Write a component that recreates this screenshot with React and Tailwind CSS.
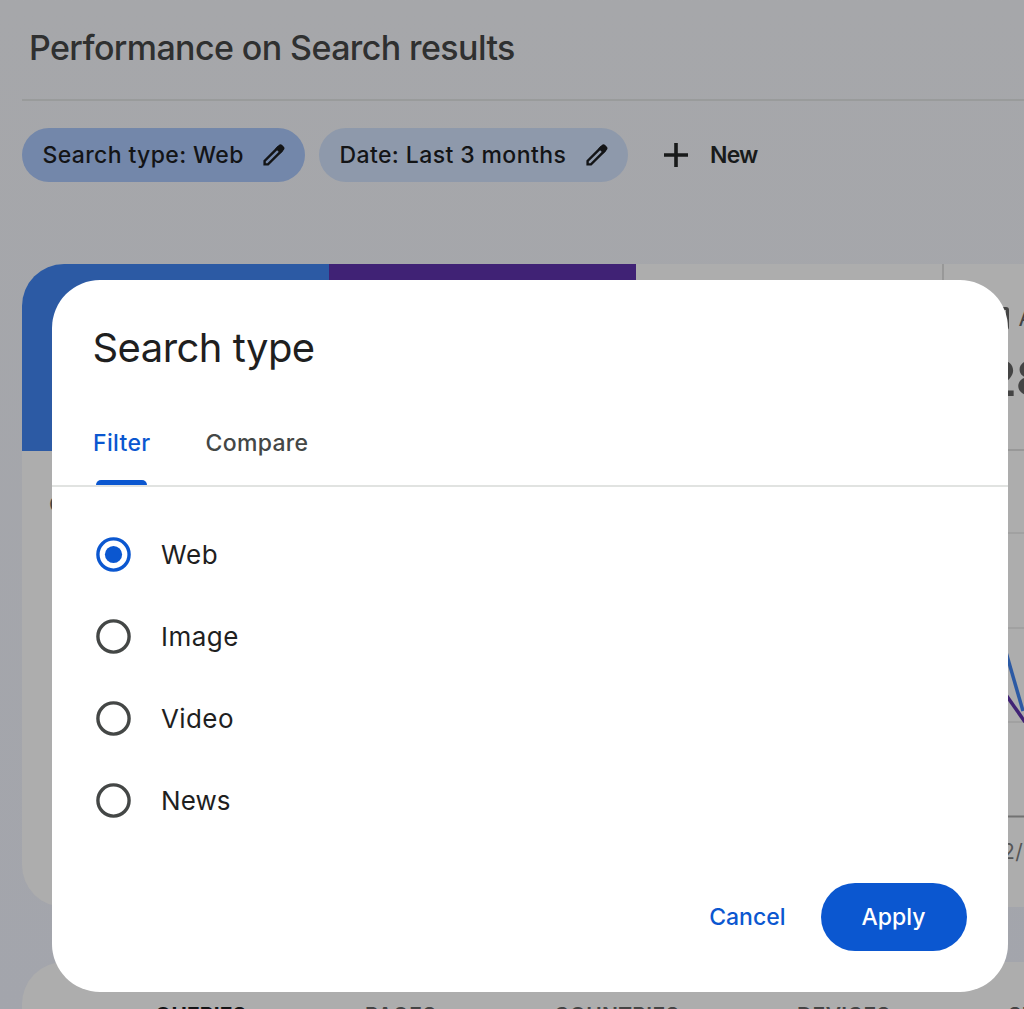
import React from "react";

function Pencil() {
  return (
    <svg className="size-[22px] shrink-0" viewBox="0 0 22 22" fill="none">
      <path d="M1.6 20.4v-3.4L14.8 3.8l3.4 3.4L5 20.4z" stroke="#131416" strokeWidth="2.4" />
      <path d="M12.4 4.4l3.5-3.4q1.6-1.4 3.2 0l1.7 1.7q1.4 1.6 0 3.2l-3.4 3.5z" fill="#131416" />
    </svg>
  );
}

function Chip({ label, className, textClass }) {
  return (
    <button className={"flex h-[54px] items-center rounded-full pl-[20.5px] pr-5 " + className}>
      <span className={"flex-1 whitespace-nowrap text-left text-[23px] font-medium text-[#131416] " + textClass}>{label}</span>
      <Pencil />
    </button>
  );
}

function Metrics() {
  return (
    <div className="flex h-[187px] w-[1229px]">
      <div className="w-[307px] bg-[#2c5aa4]" />
      <div className="w-[307px] bg-[#402275]" />
      <div className="w-[307.5px] border-b-2 border-r-2 border-[#989898]" />
      <div className="flex flex-1 flex-col border-b-2 border-[#989898] pl-[42px] pt-[42px] text-[#444]">
        <div className="flex h-[24px] items-center gap-[10px]">
          <span className="size-[23px] shrink-0 rounded-[3px] border-[3px] border-[#444]" />
          <span className="whitespace-nowrap text-[23px]">Average position</span>
        </div>
        <span className="mt-[18px] text-[50px] font-semibold leading-[60px] tracking-[-1px]">28.4</span>
      </div>
    </div>
  );
}

function Chart() {
  return (
    <div className="relative h-[456px]">
      <span className="absolute left-[27px] top-[40px] text-[22px] leading-[26px] text-[#444]">Clicks</span>
      <svg className="absolute left-0 top-0" width="1002" height="456" fill="none">
        <path d="M30 82H1002M30 177H1002M30 271H1002" stroke="#9d9d9d" strokeWidth="1.6" />
        <path d="M30 365.5H1002" stroke="#727272" strokeWidth="2" />
        <path d="M982 241L1003 271" stroke="#402275" strokeWidth="3.5" />
        <path d="M982.5 196L1001 260" stroke="#2c5aa4" strokeWidth="3.5" />
      </svg>
      <span className="absolute left-[980px] top-[389px] text-[21px] leading-[24px] tracking-[0.5px] text-[#555]">2/8</span>
    </div>
  );
}

const TABS = [
  ["QUERIES", "w-[210px] text-[#131416] font-bold tracking-[0.1px]"],
  ["PAGES", "w-[189px] text-[#444] font-semibold tracking-[0.7px]"],
  ["COUNTRIES", "w-[243px] text-[#444] font-semibold tracking-[0.3px]"],
  ["DEVICES", "w-[211px] text-[#444] font-semibold tracking-[0.4px]"],
  ["SEARCH APPEARANCE", "text-[#444] font-semibold"],
];

const OPTIONS = [
  ["Web", "tracking-[0.7px]"],
  ["Image", "tracking-[0.5px]"],
  ["Video", "tracking-[0.4px]"],
  ["News", "tracking-[0.1px]"],
];

function Dialog() {
  return (
    <div role="dialog" className="absolute left-[52px] top-[280px] flex h-[712px] w-[955.5px] flex-col rounded-[48px] bg-white">
      <h2 className="ml-[40.5px] mt-[44px] h-[48px] whitespace-nowrap text-[40px] leading-[48px] tracking-[-0.55px] text-[#1f1f1f]">
        Search type
      </h2>
      <div className="mt-[57px] flex h-[58px] shrink-0 gap-[55px] border-b-2 border-[#e1e3e1] pl-[41px] text-[23px] font-medium leading-[28px]">
        <div className="flex flex-col items-center justify-between text-[#0b57d0]">
          <span className="tracking-[0.35px]">Filter</span>
          <i className="h-[5px] w-[51px] rounded-t-[5px] bg-[#0b57d0]" />
        </div>
        <span className="tracking-[0.3px] text-[#444746]">Compare</span>
      </div>
      <div className="mt-[26.5px] flex flex-col pl-[44px]">
        {OPTIONS.map(([name, cls], i) => (
          <label key={name} className="flex h-[82px] items-center gap-[30px] text-[26px] text-[#1f1f1f]">
            <svg width="35" height="35" viewBox="0 0 35 35" fill="none">
              <circle cx="17.5" cy="17.5" r="15.6" stroke={i === 0 ? "#0b57d0" : "#444746"} strokeWidth="3.4" />
              {i === 0 && <circle cx="17.5" cy="17.5" r="8.6" fill="#0b57d0" />}
            </svg>
            <span className={cls}>{name}</span>
          </label>
        ))}
      </div>
      <div className="mt-[41px] flex h-[68px] shrink-0 items-center justify-end gap-[35px] pr-[41px] text-[23px] font-medium">
        <button className="pt-[2px] text-[#0b57d0]">Cancel</button>
        <button className="h-[68px] w-[146px] rounded-full bg-[#0b57d0] pt-[2px] text-white">Apply</button>
      </div>
    </div>
  );
}

export default function App() {
  return (
    <div className="relative h-[1009px] w-[1024px] overflow-hidden bg-linear-to-b from-[#a6a7aa] to-[#a3a5ac] font-['Inter',sans-serif]">
      <header className="ml-[22px] h-[101px] border-b-2 border-[#999b9b] pl-[7px] pt-[27px]">
        <h1 className="whitespace-nowrap text-[34px] font-medium leading-[42px] tracking-[-0.6px] text-[#2f3030]">
          Performance on Search results
        </h1>
      </header>
      <div className="mt-[27px] flex h-[54px] items-center pl-[22px]">
        <Chip label="Search type: Web" className="w-[283px] bg-[#7387aa]" textClass="tracking-[0.37px]" />
        <Chip label="Date: Last 3 months" className="ml-[14px] w-[309px] bg-[#8e99ab]" textClass="tracking-[0.4px]" />
        <button className="ml-[36px] flex items-center gap-[22px] text-[23px] font-semibold text-[#181a1a]">
          <svg width="24" height="24" viewBox="0 0 24 24" stroke="#181a1a" strokeWidth="3.6">
            <path d="M12 0v24M0 12h24" />
          </svg>
          <span className="tracking-[-0.8px]">New</span>
        </button>
      </div>
      <section className="ml-[22px] mt-[82px] h-[643px] overflow-hidden rounded-l-[42px] bg-[#adadad]">
        <Metrics />
        <Chart />
      </section>
      <section className="ml-[22px] mt-[55px] h-[80px] rounded-tl-[42px] bg-[#adadad]">
        <div className="flex whitespace-nowrap pl-[133px] pt-[41px] text-[21px] leading-[26px]">
          {TABS.map(([name, cls]) => (
            <span key={name} className={"shrink-0 " + cls}>{name}</span>
          ))}
        </div>
      </section>
      <Dialog />
    </div>
  );
}
